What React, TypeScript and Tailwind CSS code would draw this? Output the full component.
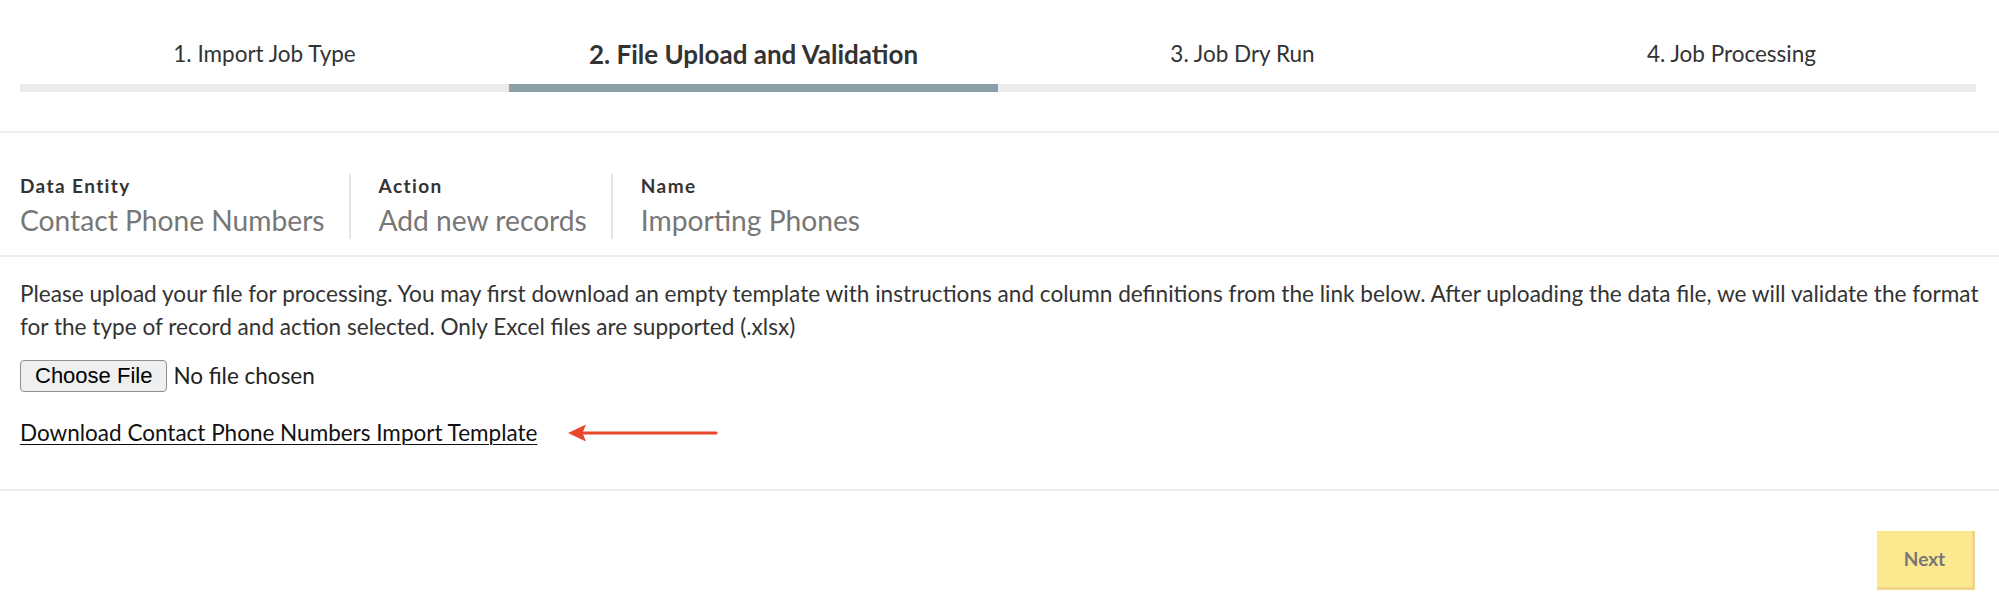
import React from "react";

const steps = [
  { label: "1. Import Job Type", active: false },
  { label: "2. File Upload and Validation", active: true },
  { label: "3. Job Dry Run", active: false },
  { label: "4. Job Processing", active: false },
];

const info = [
  { label: "Data Entity", value: "Contact Phone Numbers" },
  { label: "Action", value: "Add new records" },
  { label: "Name", value: "Importing Phones" },
];

export default function App() {
  return (
    <div className="w-[1999px] bg-white text-[#333]" style={{ fontFamily: "Lato, 'Open Sans', sans-serif" }}>
      {/* Steps */}
      <div className="border-b-2 border-[#eeeeee] pl-5 pr-[23px] pt-9 pb-[39px]">
        <div className="grid grid-cols-4">
          {steps.map((s) => (
            <div key={s.label} className="flex flex-col">
              <div className="flex h-9 items-center justify-center">
                <span className={s.active ? "text-[26px] font-bold text-[#333]" : "text-[22.5px] text-[#333]"}>{s.label}</span>
              </div>
              <div className={"mt-3 h-2 " + (s.active ? "bg-[#89a0a7]" : "bg-[#ececec]")} />
            </div>
          ))}
        </div>
      </div>

      {/* Info */}
      <div className="border-b-2 border-[#eeeeee] px-5 pt-[41px] pb-[16px]">
        <div className="flex">
          {info.map((c, i) => (
            <div
              key={c.label}
              className={
                "flex flex-col pb-[3px] " +
                (i < info.length - 1 ? "border-r-2 border-[#e4e4e4] pr-6 " : "") +
                (i > 0 ? "pl-[28px]" : "")
              }
            >
              <div className="text-[19px] font-bold leading-6 tracking-[1.4px] text-[#333]">{c.label}</div>
              <div className="mt-[6px] text-[28.2px] leading-8 text-[#777]">{c.value}</div>
            </div>
          ))}
        </div>
      </div>

      {/* Upload */}
      <div className="border-b-2 border-[#eeeeee] pl-5 pr-5 pt-5 pb-[42px]">
        <p className="text-[22.6px] leading-[33px] text-[#333]">
          Please upload your file for processing. You may first download an empty template with instructions and column definitions from the link below. After uploading the data file, we will validate the format
          <br />
          for the type of record and action selected. Only Excel files are supported (.xlsx)
        </p>
        <div className="mt-[16px] flex items-center">
          <button
            className="h-8 rounded-[4px] border border-[#8f8f8f] bg-[#efefef] px-[14px] text-[22px] leading-none text-black"
            style={{ fontFamily: "'Liberation Sans', Arial, sans-serif" }}
          >
            Choose File
          </button>
          <span className="ml-[6px] text-[22.5px] text-[#222]">No file chosen</span>
        </div>
        <div className="mt-[26px] flex h-7 items-center">
          <a href="#" className="text-[22.5px] leading-7 text-[#111] underline decoration-1 underline-offset-[3px]">
            Download Contact Phone Numbers Import Template
          </a>
          <svg className="ml-[31px]" width="150" height="20" viewBox="0 0 150 20">
            <line x1="12" y1="10" x2="148" y2="10" stroke="#e8472e" strokeWidth="3" strokeLinecap="round" />
            <polygon points="0,10 18,1.5 14.5,10 18,18.5" fill="#e8472e" />
          </svg>
        </div>
      </div>

      {/* Footer */}
      <div className="flex justify-end pr-6 pt-10 pb-6">
        <button className="h-[59px] w-[98px] border-b-[3px] border-r-[3px] border-[#f0d58c] bg-[#fce98f] text-[19px] font-bold text-[#777]">
          Next
        </button>
      </div>
    </div>
  );
}
